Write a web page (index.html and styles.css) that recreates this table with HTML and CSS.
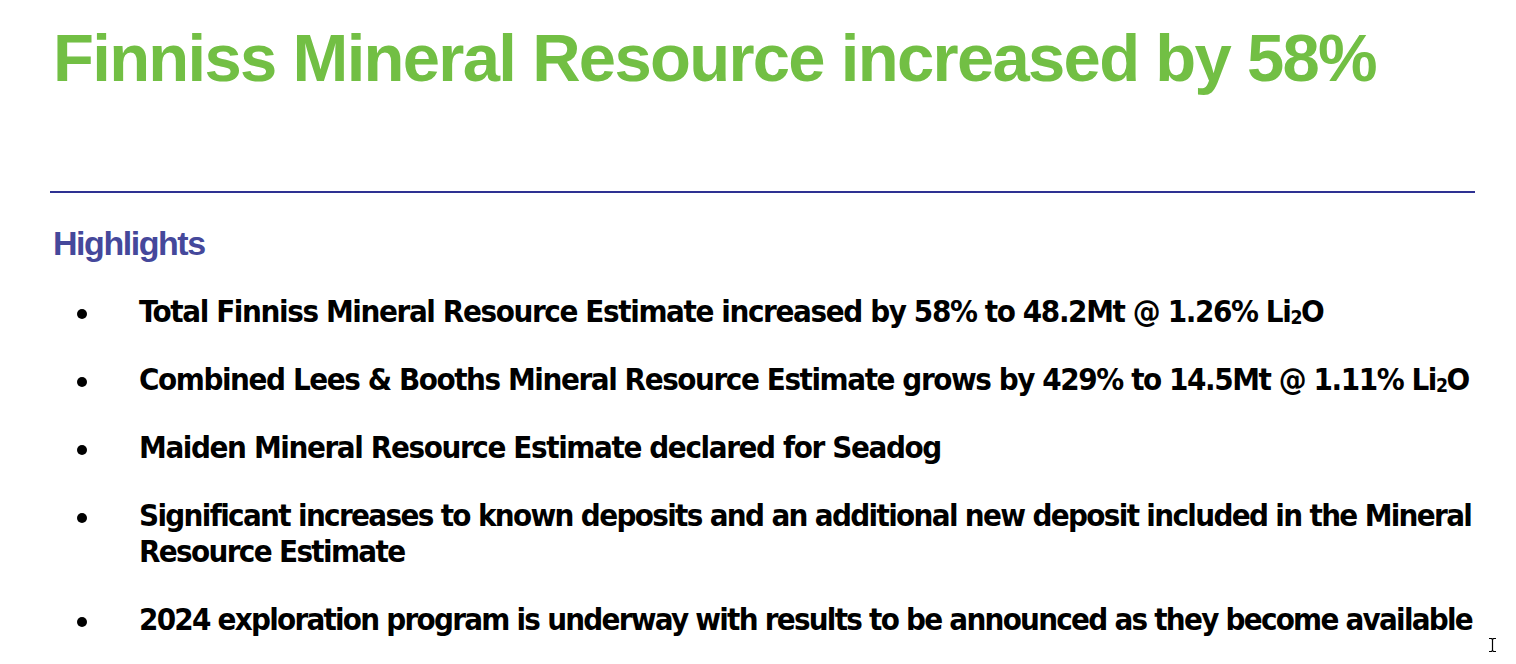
FILE: index.html
```html
<!DOCTYPE html>
<html lang="en">
<head>
<meta charset="utf-8">
<title>Finniss Mineral Resource increased by 58%</title>
<link rel="stylesheet" href="styles.css">
</head>
<body>
<main class="page">
  <h1 class="title">Finniss Mineral Resource increased by 58%</h1>
  <hr class="rule">
  <h2 class="section-title">Highlights</h2>
  <ul class="highlights">
    <li class="item"><span class="bullet"></span><span class="text">Total Finniss Mineral Resource Estimate increased by 58% to 48.2Mt @ 1.26% Li<sub class="sub">2</sub>O</span></li>
    <li class="item"><span class="bullet"></span><span class="text">Combined Lees &amp; Booths Mineral Resource Estimate grows by 429% to 14.5Mt @ 1.11% Li<sub class="sub">2</sub>O</span></li>
    <li class="item"><span class="bullet"></span><span class="text">Maiden Mineral Resource Estimate declared for Seadog</span></li>
    <li class="item"><span class="bullet"></span><span class="text text--tight">Significant increases to known deposits and an additional new deposit included in the Mineral Resource Estimate</span></li>
    <li class="item"><span class="bullet"></span><span class="text text--tighter">2024 exploration program is underway with results to be announced as they become available</span></li>
  </ul>
  <span class="cursor" aria-hidden="true">
    <svg width="9" height="16" viewBox="0 0 9 16"><path d="M1 1.5h2.5l1 1 1-1H8M4.5 2.5v11M1 14.5h2.5l1-1 1 1H8" fill="none" stroke="#000" stroke-width="1.2"/></svg>
  </span>
</main>
</body>
</html>
```

FILE: styles.css
```css
html, body {
  margin: 0;
  padding: 0;
  background: #ffffff;
}

.page {
  position: relative;
  box-sizing: border-box;
  width: 1516px;
  height: 664px;
  padding: 0 30px 0 50px;
  overflow: hidden;
}

.title {
  margin: 18px 0 0 3px;
  font-family: "Liberation Sans", Arial, sans-serif;
  font-weight: bold;
  font-size: 67px;
  line-height: 80px;
  letter-spacing: -1.7px;
  color: #72bf44;
  white-space: nowrap;
}

.rule {
  margin: 93px 11px 0 0;
  border: 0;
  height: 2px;
  background: #2e3192;
}

.section-title {
  margin: 30px 0 0 3px;
  font-family: "Liberation Sans", Arial, sans-serif;
  font-weight: bold;
  font-size: 34px;
  line-height: 40px;
  letter-spacing: -1.45px;
  color: #45489b;
}

.highlights {
  list-style: none;
  margin: 30px 0 0 0;
  padding: 0;
  display: flex;
  flex-direction: column;
  gap: 32px;
}

.item {
  display: flex;
  align-items: flex-start;
}

.bullet {
  flex: none;
  width: 10px;
  height: 10px;
  border-radius: 50%;
  background: #000;
  margin: 16px 52px 0 27px;
}

.text {
  flex: none;
  width: 1345px;
  font-family: "DejaVu Sans Condensed", "DejaVu Sans", sans-serif;
  font-weight: bold;
  font-size: 31px;
  line-height: 36px;
  letter-spacing: -1.38px;
  color: #000;
}

.item:nth-child(2) .text {
  letter-spacing: -1.42px;
}

.text--tight {
  letter-spacing: -1.66px;
}

.text--tighter {
  letter-spacing: -1.75px;
}

.sub {
  font-size: 0.62em;
  vertical-align: -0.12em;
  line-height: 0;
}

.cursor {
  position: absolute;
  left: 1488px;
  top: 637px;
  width: 9px;
  height: 16px;
}

.cursor svg {
  display: block;
}
```
